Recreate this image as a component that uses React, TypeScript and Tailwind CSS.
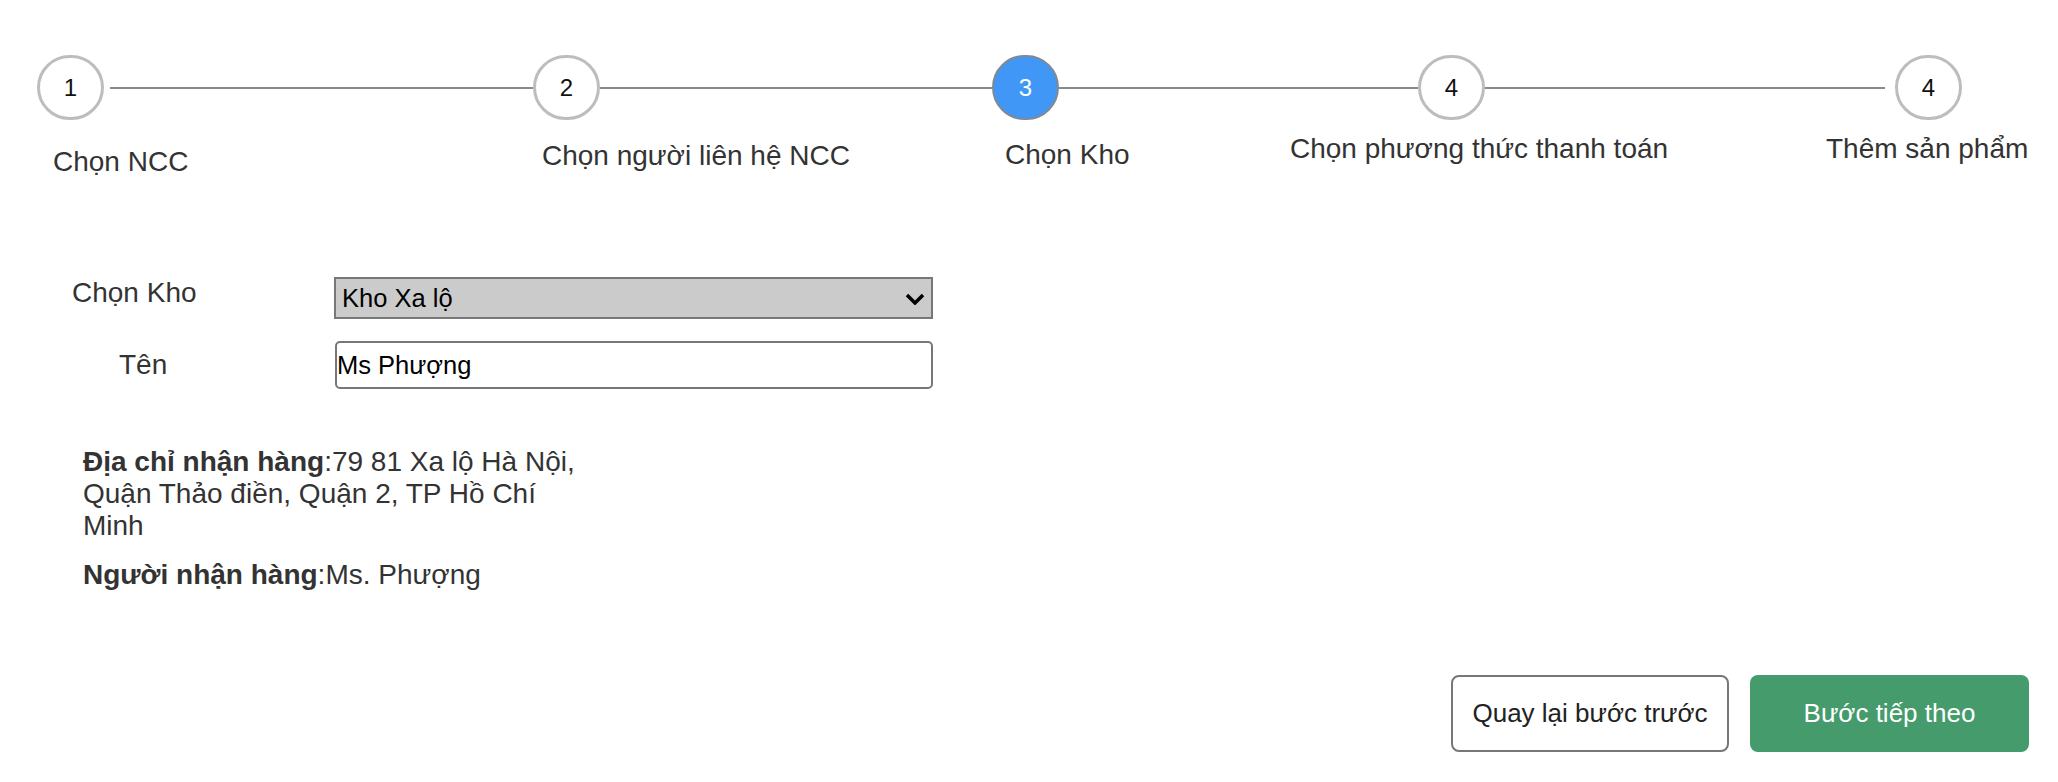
import React from "react";

type StepCircleProps = {
  n: number;
  active?: boolean;
};

const StepCircle = ({ n, active }: StepCircleProps) => (
  <div
    className={`w-[67px] h-[65px] shrink-0 rounded-full flex items-center justify-center text-[24px] ${
      active
        ? "bg-[#4197f6] text-white border-2 border-[#7d8a96]"
        : "bg-white text-[#111] border-[3px] border-[#bdbdbd]"
    }`}
  >
    {n}
  </div>
);

const Line = ({ className }: { className: string }) => (
  <div className={`h-[2px] bg-[#8a8a8a] shrink-0 ${className}`} />
);

export default function App() {
  return (
    <div className="w-[2058px] h-[782px] bg-white text-[#333] font-['Liberation_Sans',Arial,sans-serif]">
      {/* Stepper */}
      <div className="flex items-center pt-[55px] pl-[37px]">
        <StepCircle n={1} />
        <Line className="ml-[6px] w-[423px]" />
        <StepCircle n={2} />
        <Line className="w-[392px]" />
        <StepCircle n={3} active />
        <Line className="w-[359px]" />
        <StepCircle n={4} />
        <Line className="w-[400px]" />
        <div className="w-[10px] shrink-0" />
        <StepCircle n={4} />
      </div>

      <div className="flex items-start pl-[53px] mt-[13px] text-[28px] leading-[32px] whitespace-nowrap">
        <div className="w-[489px] shrink-0 mt-[13px]">Chọn NCC</div>
        <div className="w-[463px] shrink-0 mt-[7px]">Chọn người liên hệ NCC</div>
        <div className="w-[285px] shrink-0 mt-[6px]">Chọn Kho</div>
        <div className="w-[536px] shrink-0">Chọn phương thức thanh toán</div>
        <div>Thêm sản phẩm</div>
      </div>

      {/* Form */}
      <div className="mt-[99px] flex flex-col gap-[22px]">
        <div className="flex items-center">
          <div className="w-[334px] shrink-0 pl-[72px] mb-[10px] text-[28px] leading-[32px]">Chọn Kho</div>
          <div className="relative w-[599px] h-[42px]">
            <select
              defaultValue="xalo"
              className="appearance-none w-full h-full bg-[#cbcbcb] border-2 border-[#777] pl-[6px] text-[25.5px] text-black outline-none"
            >
              <option value="xalo">Kho Xa lộ</option>
            </select>
            <svg
              className="absolute right-[8px] top-[16px] pointer-events-none"
              width="20"
              height="12"
              viewBox="0 0 20 12"
            >
              <polyline points="2,2 10,10 18,2" fill="none" stroke="#000" strokeWidth="3.5" />
            </svg>
          </div>
        </div>
        <div className="flex items-center">
          <div className="w-[335px] shrink-0 pl-[119px] text-[28px] leading-[32px]">Tên</div>
          <input
            readOnly
            value="Ms Phượng"
            className="w-[598px] h-[48px] border-2 border-[#777] rounded-[5px] px-0 text-[25.5px] text-black outline-none"
          />
        </div>
      </div>

      {/* Delivery info */}
      <div className="mt-[57px] ml-[83px] w-[510px] text-[28px] leading-[32px]">
        <p>
          <b>Địa chỉ nhận hàng</b>:79 81 Xa lộ Hà Nội, Quận Thảo điền, Quận 2, TP Hồ Chí Minh
        </p>
        <p className="mt-[17px]">
          <b>Người nhận hàng</b>:Ms. Phượng
        </p>
      </div>

      {/* Actions */}
      <div className="mt-[84px] flex justify-end gap-[21px] pr-[29px]">
        <button className="w-[278px] h-[77px] border-2 border-[#777] rounded-[8px] bg-white text-[26px] text-[#222]">
          Quay lại bước trước
        </button>
        <button className="w-[279px] h-[77px] rounded-[8px] bg-[#459b6c] text-[26px] text-white">
          Bước tiếp theo
        </button>
      </div>
    </div>
  );
}
